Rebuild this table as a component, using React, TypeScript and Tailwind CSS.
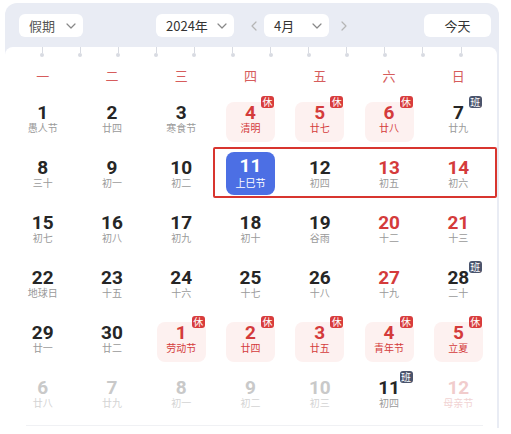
import React from "react";

type Kind = "normal" | "weekend" | "rest" | "work" | "faded" | "fadedRed" | "selected";
type Cell = { d: number; l: string; k: Kind; workBadge?: boolean };

const weeks: Cell[][] = [
  [
    { d: 1, l: "愚人节", k: "normal" },
    { d: 2, l: "廿四", k: "normal" },
    { d: 3, l: "寒食节", k: "normal" },
    { d: 4, l: "清明", k: "rest" },
    { d: 5, l: "廿七", k: "rest" },
    { d: 6, l: "廿八", k: "rest" },
    { d: 7, l: "廿九", k: "work" },
  ],
  [
    { d: 8, l: "三十", k: "normal" },
    { d: 9, l: "初一", k: "normal" },
    { d: 10, l: "初二", k: "normal" },
    { d: 11, l: "上巳节", k: "selected" },
    { d: 12, l: "初四", k: "normal" },
    { d: 13, l: "初五", k: "weekend" },
    { d: 14, l: "初六", k: "weekend" },
  ],
  [
    { d: 15, l: "初七", k: "normal" },
    { d: 16, l: "初八", k: "normal" },
    { d: 17, l: "初九", k: "normal" },
    { d: 18, l: "初十", k: "normal" },
    { d: 19, l: "谷雨", k: "normal" },
    { d: 20, l: "十二", k: "weekend" },
    { d: 21, l: "十三", k: "weekend" },
  ],
  [
    { d: 22, l: "地球日", k: "normal" },
    { d: 23, l: "十五", k: "normal" },
    { d: 24, l: "十六", k: "normal" },
    { d: 25, l: "十七", k: "normal" },
    { d: 26, l: "十八", k: "normal" },
    { d: 27, l: "十九", k: "weekend" },
    { d: 28, l: "二十", k: "work" },
  ],
  [
    { d: 29, l: "廿一", k: "normal" },
    { d: 30, l: "廿二", k: "normal" },
    { d: 1, l: "劳动节", k: "rest" },
    { d: 2, l: "廿四", k: "rest" },
    { d: 3, l: "廿五", k: "rest" },
    { d: 4, l: "青年节", k: "rest" },
    { d: 5, l: "立夏", k: "rest" },
  ],
  [
    { d: 6, l: "廿八", k: "faded" },
    { d: 7, l: "廿九", k: "faded" },
    { d: 8, l: "初一", k: "faded" },
    { d: 9, l: "初二", k: "faded" },
    { d: 10, l: "初三", k: "faded" },
    { d: 11, l: "初四", k: "work" },
    { d: 12, l: "母亲节", k: "fadedRed" },
  ],
];

const weekdays = ["一", "二", "三", "四", "五", "六", "日"];

const Chevron = ({ dir = "down" }: { dir?: "down" | "left" | "right" }) => {
  const d =
    dir === "down" ? "M2 4l4 4 4-4" : dir === "left" ? "M8 2L4 6l4 4" : "M4 2l4 4-4 4";
  return (
    <svg width="12" height="12" viewBox="0 0 12 12" fill="none">
      <path d={d} stroke="currentColor" strokeWidth="1.2" strokeLinecap="round" strokeLinejoin="round" />
    </svg>
  );
};

const Badge = ({ text, dark }: { text: string; dark?: boolean }) => (
  <span
    className={`absolute -top-[6px] right-[1px] flex h-[12px] w-[13px] items-center justify-center rounded-[3px] text-[10px] leading-none text-white ${
      dark ? "bg-[#4b546c]" : "bg-[#d83c3c]"
    }`}
  >
    {text}
  </span>
);

const DayCell = ({ c }: { c: Cell }) => {
  if (c.k === "selected") {
    return (
      <div className="flex h-[55px] justify-center">
        <div className="mt-[2px] flex h-[43px] w-[49px] flex-col items-center rounded-lg bg-[#4c6fe4] pt-[5px] text-white">
          <span className="font-['Roboto'] text-[19px] font-bold leading-[18px]">{c.d}</span>
          <span className="mt-[1px] text-[10px] leading-[13px]">{c.l}</span>
        </div>
      </div>
    );
  }
  const box = c.k === "rest" ? "bg-[#fdf1f0] rounded-lg" : "";
  const num =
    c.k === "rest" || c.k === "weekend"
      ? "text-[#d43b3b]"
      : c.k === "faded"
      ? "text-[#c9c9c9]"
      : c.k === "fadedRed"
      ? "text-[#f1cccc]"
      : "text-[#262626]";
  const lunar =
    c.k === "rest"
      ? "text-[#d43b3b]"
      : c.k === "faded"
      ? "text-[#d4d4d4]"
      : c.k === "fadedRed"
      ? "text-[#f1d3d3]"
      : "text-[#9a9a9a]";
  return (
    <div className="flex h-[55px] justify-center">
      <div className={`relative mt-[7px] flex h-[40px] w-[49px] flex-col items-center pt-[2px] ${box}`}>
        <span className={`font-['Roboto'] text-[19px] font-bold leading-[18px] ${num}`}>{c.d}</span>
        <span className={`text-[10px] leading-[12px] ${lunar}`}>{c.l}</span>
        {c.k === "rest" && <Badge text="休" />}
        {c.k === "work" && <Badge text="班" dark />}
      </div>
    </div>
  );
};

export default function App() {
  return (
    <div className="min-h-screen bg-white pl-[5px] pt-[3px] font-['Noto_Sans_CJK_SC',sans-serif]">
      <div className="w-[494px] overflow-hidden rounded-t-[12px] bg-[#e9ecf4] pr-[2px]">
        {/* header */}
        <div className="flex h-[44px] items-start pt-[11px] text-[13px] text-[#333]">
          <div className="ml-[14px] flex h-[23px] w-[64px] items-center justify-between rounded-md bg-white pl-[10px] pr-[6px] text-[#555]">
            <span>假期</span>
            <span className="text-[#888]">
              <Chevron />
            </span>
          </div>
          <div className="ml-[73px] flex h-[23px] w-[78px] items-center justify-between rounded-md bg-white pl-[10px] pr-[6px]">
            <span>2024年</span>
            <span className="text-[#888]">
              <Chevron />
            </span>
          </div>
          <div className="ml-[9px] flex h-[23px] w-[21px] items-center justify-center text-[#b5b5b5]">
            <Chevron dir="left" />
          </div>
          <div className="flex h-[23px] w-[65px] items-center justify-between rounded-md bg-white pl-[10px] pr-[6px]">
            <span>4月</span>
            <span className="text-[#888]">
              <Chevron />
            </span>
          </div>
          <div className="ml-[6px] flex h-[23px] w-[18px] items-center justify-center text-[#b5b5b5]">
            <Chevron dir="right" />
          </div>
          <div className="ml-[71px] flex h-[23px] w-[67px] items-center justify-center rounded-md bg-white">
            今天
          </div>
        </div>

        {/* panel */}
        <div className="h-[381px] rounded-t-[8px] bg-white pl-[3px] pr-[4px]">
          <div className="flex h-[10px] pl-[15px]">
            {Array.from({ length: 12 }).map((_, i) => (
              <div key={i} className="flex w-[38.1px] flex-col items-center">
                <div className="h-[6px] w-px bg-[#d8dbe2]" />
                <div className="h-[4px] w-[4px] rounded-full bg-[#d8dbe2]" />
              </div>
            ))}
          </div>
          <div className="grid h-[38px] grid-cols-7 items-center text-center text-[13px] text-[#d65c5c]">
            {weekdays.map((w) => (
              <span key={w}>{w}</span>
            ))}
          </div>
          {weeks.map((row, i) => (
            <div key={i} className="relative grid grid-cols-7">
              {row.map((c, j) => (
                <DayCell key={j} c={c} />
              ))}
              {i === 1 && (
                <div className="pointer-events-none absolute -top-[3px] left-[calc(300%/7-3px)] -right-[4px] h-[51px] rounded-[2px] border-2 border-[#d8352f]" />
              )}
            </div>
          ))}
          <div className="ml-[18px] mr-[10px] h-px bg-[#f0f1f4]" />
        </div>
      </div>
    </div>
  );
}
